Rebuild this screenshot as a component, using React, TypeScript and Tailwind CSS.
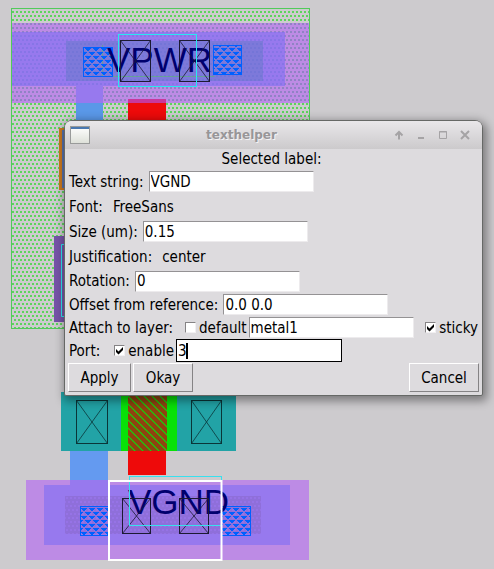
import { useState } from "react";
import type { ReactNode } from "react";

function Contact({ x, y, w, h, color = "#1c1a33" }: { x: number; y: number; w: number; h: number; color?: string }) {
  return (
    <g stroke={color} fill="none">
      <rect x={x + 0.5} y={y + 0.5} width={w} height={h} />
      <path d={`M${x + 0.5} ${y + 0.5}l${w} ${h}M${x + 0.5} ${y + h + 0.5}l${w} ${-h}`} strokeWidth="0.8" />
    </g>
  );
}

function Pin({ x, y, w }: { x: number; y: number; w: number }) {
  return (
    <g>
      <rect x={x} y={y} width={w} height="29" fill="url(#pin)" />
      <rect x={x + 0.5} y={y + 0.5} width={w} height="29" fill="none" stroke="#0060ff" />
    </g>
  );
}

function LayoutCanvas() {
  return (
    <svg className="absolute inset-0" width="494" height="569" aria-label="Cell layout">
      <defs>
        <pattern id="well" x="12" y="11" width="4" height="8" patternUnits="userSpaceOnUse">
          <path d="M0 0h2v2H0zM2 4h2v2H2z" fill="#5cd45c" shapeRendering="crispEdges" />
        </pattern>
        <pattern id="wellUnder" x="12" y="11" width="4" height="8" patternUnits="userSpaceOnUse">
          <path d="M0 0h2v2H0zM2 4h2v2H2z" fill="#507896" fillOpacity="0.42" shapeRendering="crispEdges" />
        </pattern>
        <pattern id="wellDeep" x="12" y="11" width="4" height="8" patternUnits="userSpaceOnUse">
          <path d="M0 0h2v2H0zM2 4h2v2H2z" fill="#5868d0" fillOpacity="0.25" shapeRendering="crispEdges" />
        </pattern>
        <pattern id="local" x="66" y="497" width="4" height="8" patternUnits="userSpaceOnUse">
          <path d="M0 0h2v2H0zM2 4h2v2H2z" fill="#9673e6" shapeRendering="crispEdges" />
        </pattern>
        <pattern id="pin" x="84" y="48" width="8" height="8" patternUnits="userSpaceOnUse">
          <path d="M1 0h6v1H1zM2 1h4v1H2zM3 2h2v1H3zM5 4h3v1H5zM0 4h3v1H0zM6 5h2v1H6zM0 5h2v1H0zM7 6h1v1H7zM0 6h1v1H0z" fill="#0060ff" shapeRendering="crispEdges" />
        </pattern>
        <pattern id="hatch" x="128" y="396" width="8" height="8" patternUnits="userSpaceOnUse">
          <path d="M-1 -1l10 10M-1 7l2 2M7 -1l2 2" stroke="#08e108" strokeWidth="1.1" />
        </pattern>
      </defs>

      <rect x="11" y="8" width="298" height="320" fill="url(#well)" />
      <rect x="11" y="23" width="298" height="80" fill="#bd8be5" />
      <rect x="11" y="23" width="298" height="80" fill="url(#wellUnder)" />
      <rect x="11" y="32" width="274" height="54" fill="#9779ee" />
      <rect x="76" y="86" width="27" height="17" fill="#9779ee" />
      <rect x="11" y="32" width="274" height="54" fill="url(#wellDeep)" />
      <rect x="66" y="41" width="197" height="40" fill="#7d79da" />
      <rect x="66" y="41" width="197" height="40" fill="url(#wellDeep)" />
      <rect x="76" y="103" width="27" height="20" fill="#5a98e8" />
      <rect x="128" y="99" width="38" height="4" fill="#c8389c" />
      <rect x="128" y="103" width="38" height="20" fill="#ee0a0a" />
      <rect x="11.5" y="8.5" width="298" height="320" fill="none" stroke="#52ca5a" />
      <path d="M102.5 45v31.500h112" fill="none" stroke="#52ca5a" strokeOpacity="0.5" />
      <Pin x={83} y={47} w={29} />
      <Pin x={213} y={45} w={28} />
      <text x="107" y="72" fontSize="35" fill="#00006e" className="font-['Liberation_Sans',Arial,sans-serif]">VPWR</text>
      <Contact x={120} y={40} w={30} h={41} />
      <Contact x={179} y={40} w={30} h={41} />
      <rect x="118.500" y="34.500" width="78" height="52" fill="none" stroke="#28e8f0" />

      <rect x="59" y="128" width="8" height="62" fill="#cc7a20" />
      <rect x="62" y="130" width="8" height="58" fill="#5873ad" />
      <rect x="54" y="236" width="14" height="86" fill="#7654a8" />
      <path d="M66 244.500h-4.500v72h4.500" fill="none" stroke="#28e8f0" />

      <rect x="61" y="392" width="175" height="59" fill="#22a3a6" />
      <rect x="121" y="392" width="56" height="59" fill="#08e108" />
      <rect x="128" y="392" width="39" height="59" fill="#8f4210" />
      <rect x="128" y="392" width="39" height="59" fill="url(#hatch)" />
      <Contact x={76} y={400} w={31} h={43} color="#0a3538" />
      <Contact x={191} y={400} w={30} h={43} color="#0a3538" />
      <rect x="70" y="451" width="38" height="30" fill="#649af0" />
      <rect x="128" y="451" width="38" height="24" fill="#ee0a0a" />

      <rect x="26" y="480" width="283" height="80" fill="#bd8be5" />
      <rect x="44" y="485" width="246" height="60" fill="#9779ee" />
      <rect x="70" y="480" width="38" height="6" fill="#9779ee" />
      <rect x="65" y="496" width="196" height="38" fill="#8f6fda" />
      <rect x="65" y="496" width="196" height="38" fill="url(#local)" />
      <Pin x={80} y={506} w={29} />
      <Pin x={221} y={506} w={29} />
      <text x="128" y="514" fontSize="35" fill="#00006e" className="font-['Liberation_Sans',Arial,sans-serif]">VGND</text>
      <Contact x={122} y={498} w={28} h={35} />
      <Contact x={179} y={498} w={29} h={35} />
      <rect x="129.500" y="476.500" width="92" height="49" fill="none" stroke="#38e0ee" />
      <rect x="109" y="481" width="112.500" height="79" fill="none" stroke="#ffffff" strokeWidth="2" />
    </svg>
  );
}

const fieldClass =
  "h-[21px] w-[165px] rounded-none border border-t-[#949294] border-l-[#949294] border-r-[#edebed] border-b-[#edebed] bg-white px-px outline-none";

function Field({ id, label, value }: { id: string; label: string; value: string }) {
  return (
    <>
      <label htmlFor={id}>{label}</label>
      <input id={id} defaultValue={value} className={`${fieldClass} ml-[5px]`} />
    </>
  );
}

function Tick({ label, initial }: { label: string; initial: boolean }) {
  const [on, setOn] = useState(initial);
  return (
    <label className="flex items-center gap-[3px]">
      <span className="relative flex size-[11px]">
        <input
          type="checkbox"
          checked={on}
          onChange={() => setOn(!on)}
          className="size-[11px] appearance-none border border-t-[#858385] border-l-[#858385] border-r-[#f2f0f2] border-b-[#f2f0f2] bg-white"
        />
        {on && (
          <svg className="pointer-events-none absolute inset-0" width="11" height="11" viewBox="0 0 11 11">
            <path d="M2 4l2.500 2.500L9 2v3L4.500 9.500 2 7z" fill="#000" />
          </svg>
        )}
      </span>
      {label}
    </label>
  );
}

function Button({ children, width }: { children: ReactNode; width: string }) {
  return (
    <button
      type="button"
      className={`${width} h-[29px] border border-t-white border-l-white border-r-[#858385] border-b-[#858385] bg-[#dddbde]`}
    >
      {children}
    </button>
  );
}

function TitleBar() {
  return (
    <header className="flex h-7 items-center rounded-t-md bg-gradient-to-b from-[#e9e7ea] to-[#cccacc] px-[5px]">
      <svg width="20" height="18" viewBox="0 0 20 18">
        <defs>
          <linearGradient id="pane" x1="0" y1="0" x2="0" y2="1">
            <stop offset="0" stopColor="#fff" />
            <stop offset="1" stopColor="#dde0d8" />
          </linearGradient>
        </defs>
        <rect x="0.500" y="0.500" width="19" height="17" fill="url(#pane)" stroke="#999b9a" />
        <rect x="1" y="1" width="18" height="2" fill="#4a78b0" />
      </svg>
      <h1 className="flex-1 text-center font-['DejaVu_Sans',sans-serif] text-[12px] font-bold text-[#989698] [text-shadow:1px_1px_0_#f4f2f4]">texthelper</h1>
      <div className="flex justify-end gap-[10px] pr-[6px]">
        <button type="button" aria-label="Shade">
          <svg width="12" height="12" viewBox="0 0 12 12" fill="none" stroke="#a5a3a5" strokeWidth="2">
            <path d="M6 10.500V3M2.500 6.500L6 3l3.500 3.500" />
          </svg>
        </button>
        <button type="button" aria-label="Minimize">
          <svg width="12" height="12" viewBox="0 0 12 12"><path d="M3 8h6v2H3z" fill="#a5a3a5" /></svg>
        </button>
        <button type="button" aria-label="Maximize">
          <svg width="12" height="12" viewBox="0 0 12 12" fill="none" stroke="#a5a3a5">
            <path d="M2.500 2.500h7v7h-7z" /><path d="M2 3h8" />
          </svg>
        </button>
        <button type="button" aria-label="Close">
          <svg width="12" height="12" viewBox="0 0 12 12" stroke="#a5a3a5" strokeWidth="2">
            <path d="M2 2l8 8M10 2l-8 8" />
          </svg>
        </button>
      </div>
    </header>
  );
}

export default function App() {
  return (
    <main className="relative min-h-screen overflow-hidden bg-[#cdcbce]">
      <LayoutCanvas />
      <section className="absolute top-[120px] right-[11px] left-16 rounded-t-lg rounded-b-xs border border-[#666866] bg-[#dddbde] font-['DejaVu_Sans_Condensed','DejaVu_Sans',sans-serif] text-[15px] leading-5 text-black shadow-[2px_3px_10px_2px_rgba(0,0,0,0.4)]">
        <TitleBar />
        <form className="px-[3px] pb-[3px]" onSubmit={(e) => e.preventDefault()}>
          <p className="h-5 pr-1 text-center">Selected label:</p>
          <div className="flex h-[25px] items-center pl-px"><Field id="text" label="Text string:" value="VGND" /></div>
          <div className="flex h-[25px] items-center gap-[10px] pl-px"><span>Font:</span><span>FreeSans</span></div>
          <div className="flex h-[25px] items-center pl-px"><Field id="size" label="Size (um):" value="0.15" /></div>
          <div className="flex h-[25px] items-center gap-[10px] pl-px"><span>Justification:</span><span>center</span></div>
          <div className="flex h-6 items-center pl-px"><Field id="rotation" label="Rotation:" value="0" /></div>
          <div className="flex h-[23px] items-center pl-px"><Field id="offset" label="Offset from reference:" value="0.0 0.0" /></div>
          <div className="flex h-[23px] items-center pl-px">
            <span className="mr-3">Attach to layer:</span>
            <Tick label="default" initial={false} />
            <input aria-label="Layer" defaultValue="metal1" className={`${fieldClass} ml-[2px]`} />
            <span className="ml-auto pr-px"><Tick label="sticky" initial={true} /></span>
          </div>
          <div className="flex h-[23px] items-center pl-px">
            <span className="mr-[14px]">Port:</span>
            <Tick label="enable" initial={true} />
            <span className="relative ml-[2px] flex">
              <input aria-label="Port number" defaultValue="3" className="h-[23px] w-[166px] border border-black bg-white px-px outline-none" />
              <span className="absolute top-1 left-[10px] h-4 w-[2px] bg-black" />
            </span>
          </div>
          <div className="flex gap-[2px] pt-px">
            <Button width="w-[63px]">Apply</Button>
            <Button width="w-[60px]">Okay</Button>
            <span className="ml-auto"><Button width="w-[70px]">Cancel</Button></span>
          </div>
        </form>
      </section>
    </main>
  );
}
